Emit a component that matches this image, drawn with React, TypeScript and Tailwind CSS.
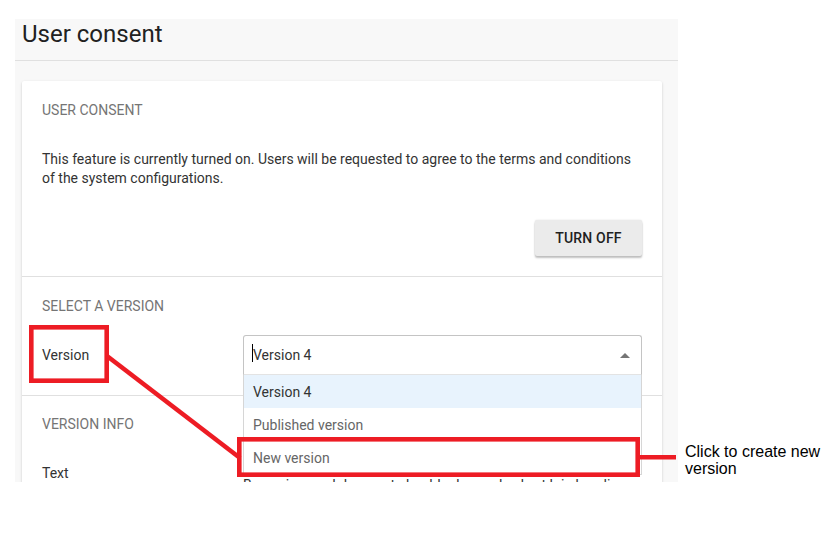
import React from 'react'

const options = [
  { label: 'Version 4', active: true },
  { label: 'Published version', active: false },
  { label: 'New version', active: false },
]

function SectionTitle({ children }: { children: React.ReactNode }) {
  return <div className="text-sm leading-4 uppercase text-[#757575]">{children}</div>
}

function VersionSelect() {
  return (
    <div className="relative flex-1">
      <div className="h-10 flex items-center justify-between pl-[9px] pr-[11px] bg-white border border-[#c4c4c4] border-b-[#e3e3e3] rounded-t-[3px]">
        <span className="relative text-sm text-[#333]">
          <span className="absolute -left-px top-[-1px] h-[18px] w-px bg-black" />
          Version 4
        </span>
        <svg width="10" height="5" viewBox="0 0 10 5">
          <path d="M0 5 L5 0 L10 5 Z" fill="#757575" />
        </svg>
      </div>
      <div className="absolute left-0 right-0 top-full z-10 bg-white border-x border-b border-[#d6d6d6]">
        {options.map(o => (
          <div
            key={o.label}
            className={`h-[33px] flex items-center px-[9px] text-sm ${o.active ? 'bg-[#e8f3fd] text-[#333]' : 'text-[#666]'}`}
          >
            {o.label}
          </div>
        ))}
      </div>
    </div>
  )
}

export default function App() {
  return (
    <div className="relative w-[835px] h-[543px] bg-white font-['Roboto',sans-serif] overflow-hidden">
      <div className="ml-[15px] mt-[19px] w-[663px] h-[463px] bg-[#f8f8f8] overflow-hidden">
        <div className="h-[42px] border-b border-[#e0e0e0] pl-[7px] pt-px">
          <h1 className="text-[24px] leading-[28px] text-[#212121]">User consent</h1>
        </div>

        <div className="pt-5 pl-[7px] pr-4">
          <div className="bg-white rounded-[2px] shadow-[0_1px_3px_rgba(0,0,0,0.12),0_1px_2px_rgba(0,0,0,0.08)]">
            <section className="px-5 pt-[21px] pb-5 border-b border-[#e0e0e0]">
              <SectionTitle>User consent</SectionTitle>
              <p className="mt-8 text-sm leading-[19px] text-[#333]">
                This feature is currently turned on. Users will be requested to agree to the terms and conditions of
                the system configurations.
              </p>
              <div className="mt-8 flex justify-end">
                <button className="h-9 w-[107px] rounded-[2px] bg-[#ebebeb] text-sm font-medium tracking-[0.2px] text-[#212121] shadow-[0_2px_2px_rgba(0,0,0,0.24),0_0_2px_rgba(0,0,0,0.12)]">
                  TURN OFF
                </button>
              </div>
            </section>

            <section className="px-5 pt-[21px] pb-5 border-b border-[#e0e0e0]">
              <SectionTitle>Select a version</SectionTitle>
              <div className="mt-[21px] flex items-center">
                <div className="w-[201px] shrink-0 text-sm text-[#333]">Version</div>
                <VersionSelect />
              </div>
            </section>

            <section className="px-5 pt-5 pb-5">
              <SectionTitle>Version info</SectionTitle>
              <div className="mt-[31px] flex">
                <div className="w-[201px] shrink-0 text-sm leading-5 text-[#333]">Text</div>
                <div className="flex-1 pt-[12px] text-sm leading-5 text-[#333]">
                  Bacon ipsum dolor amet shoulder bresaola short loin boudin, pork belly tri-tip ham hock.
                </div>
              </div>
            </section>
          </div>
        </div>
      </div>

      <svg className="absolute inset-0 z-20 pointer-events-none" width="835" height="543" viewBox="0 0 835 543">
        <g fill="none" stroke="#ed1c24" strokeWidth="4.6">
          <rect x="31.3" y="327.3" width="75.4" height="53.4" />
          <rect x="239.3" y="439.3" width="398.4" height="35.4" />
          <line x1="107" y1="356" x2="240" y2="458" />
          <line x1="637" y1="457.3" x2="676" y2="457.3" />
        </g>
      </svg>

      <div className="absolute z-20 left-[685px] top-[443px] w-[140px] font-['Liberation_Sans',Arial,sans-serif] text-base leading-[17px] text-black">
        Click to create new version
      </div>
    </div>
  )
}
